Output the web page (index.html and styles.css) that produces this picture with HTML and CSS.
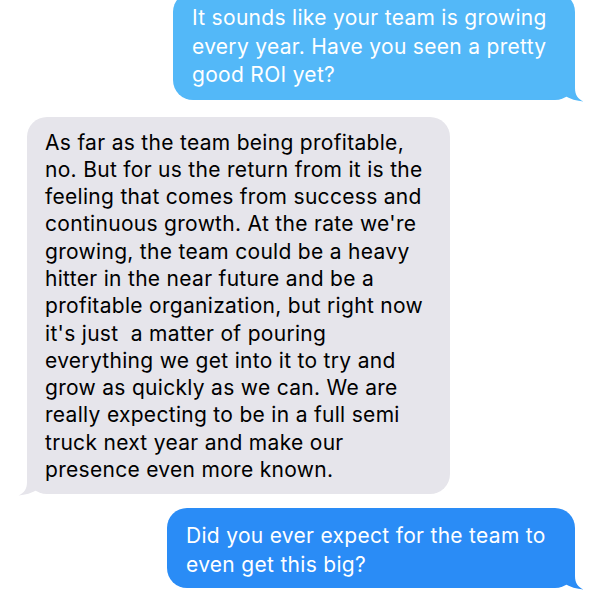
FILE: index.html
```html
<!DOCTYPE html>
<html>
<head>
<meta charset="utf-8">
<link rel="stylesheet" href="styles.css">
</head>
<body>
<div class="thread">
  <div class="msg sent first">
    <div class="bubble light">
      <svg class="tail tail-right" width="40" height="22" viewBox="0 0 40 22"><path d="M30 0 L30 8 C30 15 33 19 38.5 21.5 C32 21 25 19 19 15.5 C14 19 8 20 0 20 L0 0 Z"/></svg>
      <span class="text">It sounds like your team is growing<br>every year. Have you seen a pretty<br>good ROI yet?</span>
    </div>
  </div>
  <div class="msg received">
    <div class="bubble gray">
      <svg class="tail tail-left" width="40" height="22" viewBox="0 0 40 22"><path d="M30 0 L30 8 C30 15 33 19 38.5 21.5 C32 21 25 19 19 15.5 C14 19 8 20 0 20 L0 0 Z"/></svg>
      <span class="text">As far as the team being profitable,<br>no. But for us the return from it is the<br>feeling that comes from success and<br>continuous growth. At the rate we're<br>growing, the team could be a heavy<br>hitter in the near future and be a<br>profitable organization, but right now<br>it's just &nbsp;a matter of pouring<br>everything we get into it to try and<br>grow as quickly as we can. We are<br>really expecting to be in a full semi<br>truck next year and make our<br>presence even more known.</span>
    </div>
  </div>
  <div class="msg sent last">
    <div class="bubble blue">
      <svg class="tail tail-right" width="40" height="22" viewBox="0 0 40 22"><path d="M30 0 L30 8 C30 15 33 19 38.5 21.5 C32 21 25 19 19 15.5 C14 19 8 20 0 20 L0 0 Z"/></svg>
      <span class="text">Did you ever expect for the team to<br>even get this big?</span>
    </div>
  </div>
</div>
</body>
</html>
```
FILE: styles.css
```css
html, body {
  margin: 0;
  padding: 0;
  background: #ffffff;
}
body {
  width: 600px;
  height: 600px;
  overflow: hidden;
  font-family: Inter, "Noto Sans", sans-serif;
}
.thread {
  display: flex;
  flex-direction: column;
  margin-top: -8px;
}
.msg {
  display: flex;
}
.msg.sent {
  justify-content: flex-end;
  padding-right: 25px;
}
.msg.received {
  justify-content: flex-start;
  padding-left: 27px;
  margin-top: 17px;
}
.msg.last {
  margin-top: 14px;
}
.bubble {
  position: relative;
  font-size: 21px;
  letter-spacing: 0.3px;
  line-height: 28.5px;
  padding: 12px 0 10px 19px;
  border-radius: 20px;
  white-space: nowrap;
  box-sizing: border-box;
}
.text {
  position: relative;
  z-index: 1;
}
.bubble.light {
  width: 402px;
  background: #53b8f8;
  color: #ffffff;
}
.bubble.gray {
  width: 423px;
  background: #e6e5eb;
  color: #000000;
  line-height: 27.3px;
  padding-left: 18px;
  padding-bottom: 11px;
}
.bubble.blue {
  width: 408px;
  background: #2a8cf6;
  color: #ffffff;
  padding-top: 14px;
  padding-bottom: 9px;
}
.tail {
  position: absolute;
  bottom: -2px;
  z-index: 0;
}
.tail-right {
  right: -10px;
}
.tail-left {
  left: -10px;
  transform: scaleX(-1);
}
.light .tail path { fill: #53b8f8; }
.gray .tail path { fill: #e6e5eb; }
.blue .tail path { fill: #2a8cf6; }
```
